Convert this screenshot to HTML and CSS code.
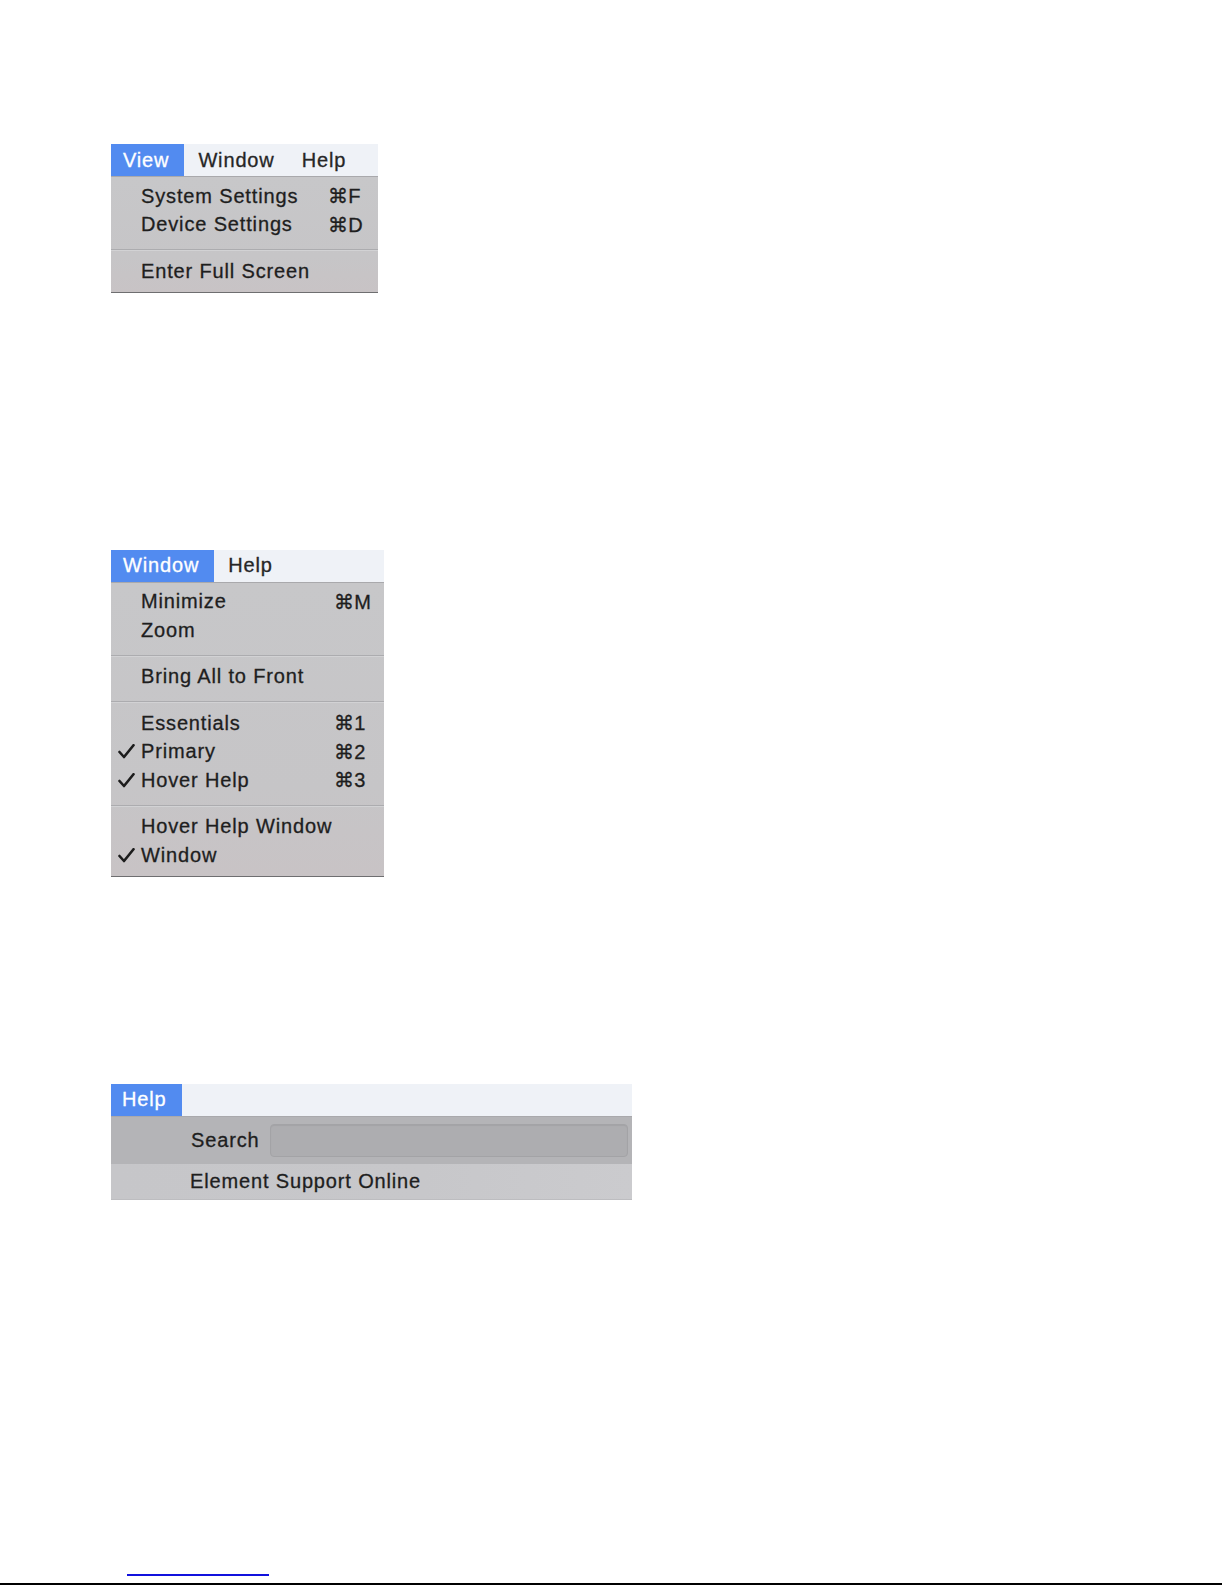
FILE: index.html
```html
<!DOCTYPE html>
<html lang="en">
<head>
<meta charset="utf-8">
<title>Menus</title>
<link rel="stylesheet" href="styles.css">
</head>
<body>
<main class="page">
  <section class="menu menu-view">
    <div class="bar">
      <span class="tab active">View</span>
      <span class="tab">Window</span>
      <span class="tab">Help</span>
    </div>
    <div class="body">
      <div class="item"><span class="chk"></span><span class="lbl">System Settings</span><span class="key">⌘F</span></div>
      <div class="item"><span class="chk"></span><span class="lbl">Device Settings</span><span class="key">⌘D</span></div>
      <div class="sep"></div>
      <div class="item"><span class="chk"></span><span class="lbl">Enter Full Screen</span><span class="key"></span></div>
    </div>
  </section>

  <section class="menu menu-window">
    <div class="bar">
      <span class="tab active">Window</span>
      <span class="tab">Help</span>
    </div>
    <div class="body">
      <div class="item"><span class="chk"></span><span class="lbl">Minimize</span><span class="key">⌘M</span></div>
      <div class="item"><span class="chk"></span><span class="lbl">Zoom</span><span class="key"></span></div>
      <div class="sep"></div>
      <div class="item"><span class="chk"></span><span class="lbl">Bring All to Front</span><span class="key"></span></div>
      <div class="sep"></div>
      <div class="item"><span class="chk"></span><span class="lbl">Essentials</span><span class="key">⌘1</span></div>
      <div class="item"><span class="chk"><svg viewBox="0 0 17 15" width="17" height="15"><path d="M1.5 8 L6 13 L15.5 1.2" fill="none" stroke="#1c1c1c" stroke-width="2.6" stroke-linecap="round" stroke-linejoin="round"/></svg></span><span class="lbl">Primary</span><span class="key">⌘2</span></div>
      <div class="item"><span class="chk"><svg viewBox="0 0 17 15" width="17" height="15"><path d="M1.5 8 L6 13 L15.5 1.2" fill="none" stroke="#1c1c1c" stroke-width="2.6" stroke-linecap="round" stroke-linejoin="round"/></svg></span><span class="lbl">Hover Help</span><span class="key">⌘3</span></div>
      <div class="sep"></div>
      <div class="item"><span class="chk"></span><span class="lbl">Hover Help Window</span><span class="key"></span></div>
      <div class="item"><span class="chk"><svg viewBox="0 0 17 15" width="17" height="15"><path d="M1.5 8 L6 13 L15.5 1.2" fill="none" stroke="#1c1c1c" stroke-width="2.6" stroke-linecap="round" stroke-linejoin="round"/></svg></span><span class="lbl">Window</span><span class="key"></span></div>
    </div>
  </section>

  <section class="menu menu-help">
    <div class="bar">
      <span class="tab active">Help</span>
    </div>
    <div class="search-row">
      <span class="search-lbl">Search</span>
      <span class="search-field"></span>
    </div>
    <div class="help-item">Element Support Online</div>
  </section>
</main>
<footer class="foot">
  <div class="fn-link"></div>
  <div class="rule"></div>
</footer>
</body>
</html>
```

FILE: styles.css
```css
html, body {
  margin: 0;
  padding: 0;
  background: #ffffff;
}

body {
  min-height: 1585px;
  display: flex;
  flex-direction: column;
  font-family: "Liberation Sans", Arial, "DejaVu Sans", sans-serif;
  font-size: 20px;
  letter-spacing: 0.85px;
  color: #1e1e1e;
  -webkit-text-stroke: 0.3px currentColor;
}

.page {
  padding: 144px 0 0 111px;
  display: flex;
  flex-direction: column;
  align-items: flex-start;
}

.menu {
  display: flex;
  flex-direction: column;
}

.menu-view { width: 267px; }
.menu-window { width: 273px; margin-top: 257px; }
.menu-help { width: 521px; margin-top: 207px; }

.bar {
  height: 33px;
  display: flex;
  align-items: stretch;
  background: #eff2f7;
  border-bottom: 1px solid #a9a9ac;
  box-sizing: border-box;
}

.tab {
  display: flex;
  align-items: center;
  padding: 0 13px 0 12px;
  color: #262626;
}

.tab + .tab {
  padding-left: 14px;
}

.tab.active {
  background: #528bf0;
  color: #ffffff;
  padding: 0 15px 0 12px;
}

.menu-help .tab.active {
  padding: 0 15px 0 11px;
}

.body {
  background: linear-gradient(180deg, #c7c7c9 0%, #c6c5c7 70%, #c8c3c5 100%);
  padding: 5px 0 6px;
  border-bottom: 1px solid #6e6e70;
}

.item {
  height: 28.5px;
  display: grid;
  grid-template-columns: 30px 1fr 50px;
  align-items: center;
}

.lbl {
  white-space: nowrap;
}

.chk {
  display: flex;
  align-items: center;
  padding-left: 7px;
}

.chk svg { display: block; }

.key {
  white-space: nowrap;
  font-family: "Liberation Sans", "DejaVu Sans", sans-serif;
  letter-spacing: 0.3px;
}

.sep {
  height: 2px;
  margin: 10px 0 6px;
  box-sizing: border-box;
  border-top: 1px solid #acacaf;
  border-bottom: 1px solid #d2d2d4;
}

.search-row {
  height: 47px;
  display: flex;
  align-items: center;
  background: #b4b4b7;
  padding: 0 4px 0 80px;
  box-sizing: border-box;
}

.search-lbl {
  width: 79px;
}

.search-field {
  flex: 1;
  height: 33px;
  box-sizing: border-box;
  border: 1px solid #a3a3a6;
  border-radius: 4px;
  background: #adadb0;
  box-shadow: inset 0 1px 1px rgba(0,0,0,0.06);
}

.help-item {
  height: 36px;
  display: flex;
  align-items: center;
  padding-left: 79px;
  background: linear-gradient(90deg, #c6c6c9 0%, #c7c7ca 60%, #cbcbce 100%);
  border-bottom: 1px solid #bdbdc0;
  box-sizing: border-box;
}

.foot {
  margin-top: auto;
  display: flex;
  flex-direction: column;
}

.fn-link {
  margin-left: 127px;
  width: 142px;
  height: 2px;
  background: #1111dd;
}

.rule {
  margin-top: 7px;
  width: 1222px;
  height: 2px;
  background: #000000;
}
```
